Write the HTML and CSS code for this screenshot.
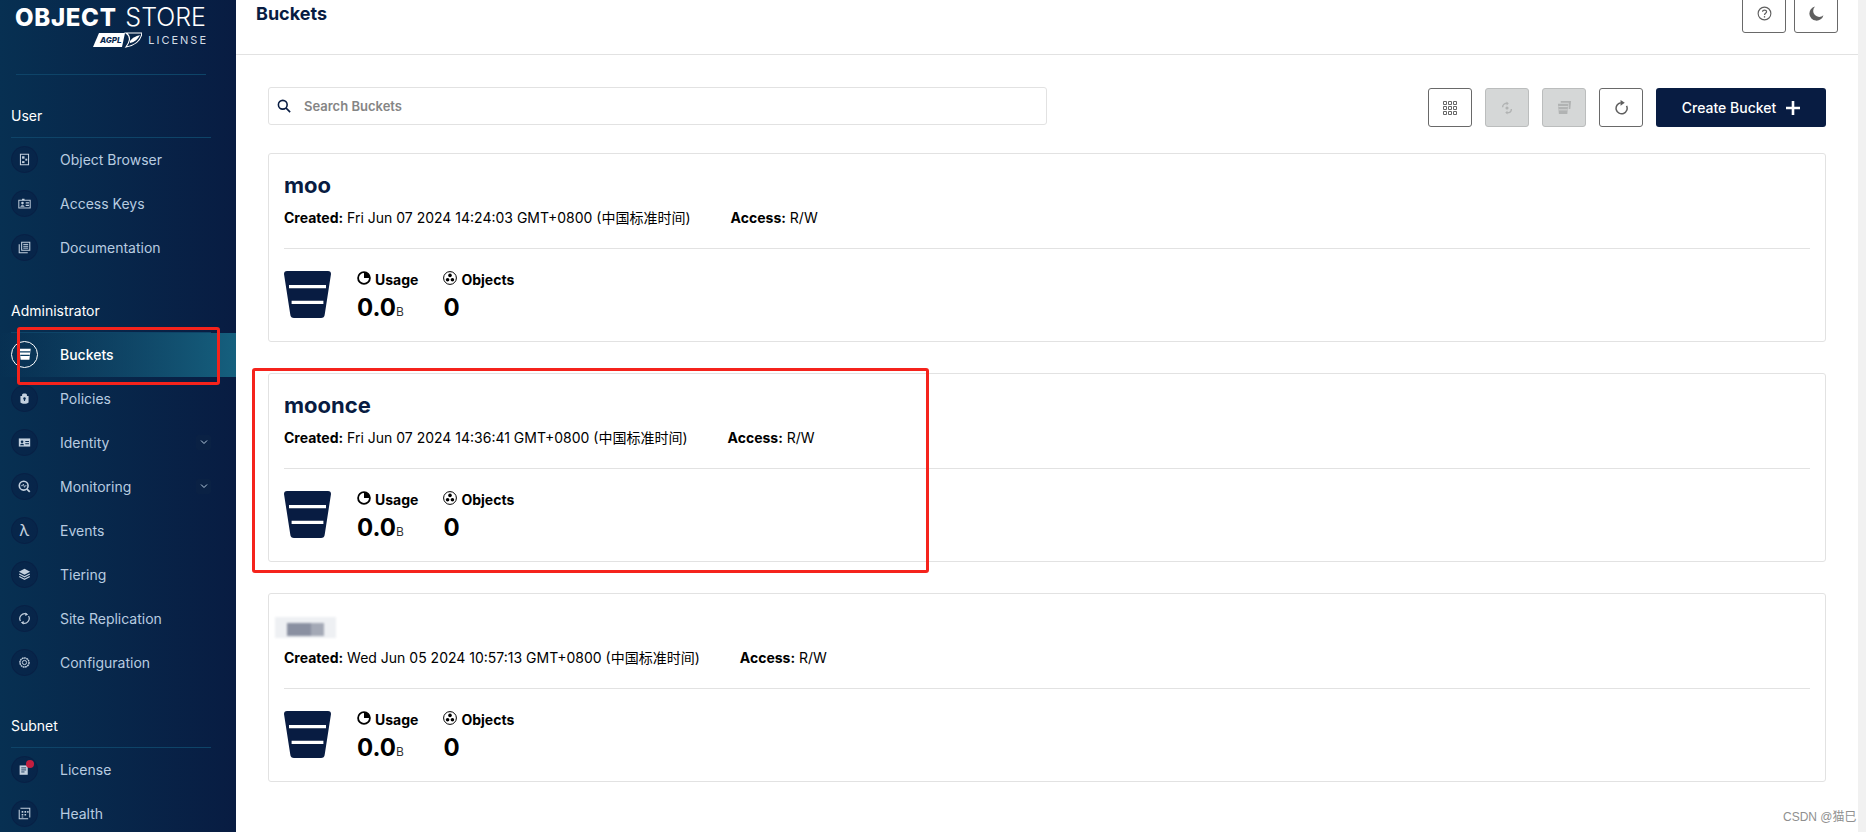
FILE: index.html
```html
<!DOCTYPE html>
<html lang="en">
<head>
<meta charset="utf-8">
<title>Buckets</title>
<link rel="stylesheet" href="styles.css">
</head>
<body>
<div class="app">
  <aside class="sidebar">
    <div class="brand">
      <div class="brand-name"><b>OBJECT</b><span>STORE</span></div>
      <div class="brand-sub">
        <svg class="agpl" viewBox="0 0 49 16" width="49" height="16"><path d="M6 1H32L29 15H0Z" fill="#fff"/><path d="M33 1H49C48 7 44 13 33 15C36 11 39 5 33 1Z" fill="none" stroke="#fff" stroke-width="1.2"/><path d="M37 9C40 5 44 4 47 3C45 7 42 10 37 11Z" fill="#fff"/><text x="7" y="11" class="agpl-text">AGPL</text></svg>
        <span class="license">LICENSE</span>
      </div>
    </div>

    <div class="section-title">User</div>
    <a class="nav"><span class="ic"><svg viewBox="0 0 16 16"><path d="M3 1.5H13V14.5H3Z" fill="none" stroke="currentColor" stroke-width="1.3"/><rect x="5" y="4" width="3" height="3" fill="currentColor"/><rect x="9" y="7" width="2.4" height="2.4" fill="currentColor"/><rect x="5" y="10" width="3" height="2.4" fill="currentColor"/></svg></span>Object Browser</a>
    <a class="nav"><span class="ic"><svg viewBox="0 0 16 16"><rect x="1" y="4" width="14" height="9.5" fill="none" stroke="currentColor" stroke-width="1.2"/><circle cx="5.5" cy="7.5" r="1.6" fill="currentColor"/><path d="M3 12C3 9.5 8 9.5 8 12ZM5 2H8V4H5ZM9.5 6.5H13.5V8H9.5ZM9.5 9.5H13.5V11H9.5Z" fill="currentColor"/></svg></span>Access Keys</a>
    <a class="nav"><span class="ic"><svg viewBox="0 0 16 16"><path d="M4.5 1.5H14.5V11.5H4.5Z" fill="none" stroke="currentColor" stroke-width="1.3"/><path d="M1.5 4V14.5H12" fill="none" stroke="currentColor" stroke-width="1.3"/><path d="M6.5 4.2H12.5M6.5 6.5H12.5M6.5 8.8H12.5" stroke="currentColor" stroke-width="1.2"/></svg></span>Documentation</a>

    <div class="section-title">Administrator</div>
    <a class="nav nav-active"><span class="ic"><svg viewBox="0 0 16 16"><path d="M1.5 2H14.5L13 14.5H3Z" fill="currentColor"/><path d="M2 5.6H14M2.6 9.6H13.4" stroke="#0b3c60" stroke-width="1.3"/></svg></span>Buckets</a>
    <a class="nav"><span class="ic"><svg viewBox="0 0 16 16"><path d="M5 5V3.5C5 1.2 11 1.2 11 3.5V5H13V13C11 15 5 15 3 13V5Z" fill="currentColor"/><circle cx="8" cy="8" r="1.5" fill="#07294e"/><rect x="7.3" y="8" width="1.4" height="3" fill="#07294e"/></svg></span>Policies</a>
    <a class="nav nav-more"><span class="ic"><svg viewBox="0 0 16 16"><path d="M1 3H15V13H1Z" fill="currentColor"/><circle cx="5" cy="7" r="1.6" fill="#07294e"/><path d="M2.6 11.5C2.6 9 7.4 9 7.4 11.5ZM9 6.2H13.5V7.5H9ZM9 9H13.5V10.3H9Z" fill="#07294e"/></svg></span>Identity<span class="chev"><svg viewBox="0 0 10 10"><path d="M2 3.5L5 6.5L8 3.5" fill="none" stroke="currentColor" stroke-width="1"/></svg></span></a>
    <a class="nav nav-more"><span class="ic"><svg viewBox="0 0 16 16"><circle cx="7" cy="7" r="5.4" fill="none" stroke="currentColor" stroke-width="2"/><path d="M3.8 7H5.5L6.6 5L8 9L9 7H10.5" fill="none" stroke="currentColor" stroke-width="1"/><path d="M10.8 10.8L14.5 14.5" stroke="currentColor" stroke-width="2.2"/></svg></span>Monitoring<span class="chev"><svg viewBox="0 0 10 10"><path d="M2 3.5L5 6.5L8 3.5" fill="none" stroke="currentColor" stroke-width="1"/></svg></span></a>
    <a class="nav"><span class="ic ic-glyph">λ</span>Events</a>
    <a class="nav"><span class="ic"><svg viewBox="0 0 16 16"><path d="M8 1L15 4.6L8 8.2L1 4.6Z" fill="currentColor"/><path d="M1.5 7.4L8 10.8L14.5 7.4" fill="none" stroke="currentColor" stroke-width="1.5"/><path d="M1.5 10.4L8 13.8L14.5 10.4" fill="none" stroke="currentColor" stroke-width="1.5"/></svg></span>Tiering</a>
    <a class="nav"><span class="ic"><svg viewBox="0 0 16 16"><path d="M3 11A6 6 0 0 1 10.5 2.5M13 5A6 6 0 0 1 5.5 13.5" fill="none" stroke="currentColor" stroke-width="1.5"/><path d="M9 .5L12.5 3L9 5ZM7 11L3.5 13L7 15.5Z" fill="currentColor"/></svg></span>Site Replication</a>
    <a class="nav"><span class="ic"><svg viewBox="0 0 16 16"><circle cx="8" cy="8" r="5.6" fill="none" stroke="currentColor" stroke-width="1.8" stroke-dasharray="2.2 .6"/><circle cx="8" cy="8" r="2.6" fill="none" stroke="currentColor" stroke-width="1.2"/></svg></span>Configuration</a>

    <div class="section-title">Subnet</div>
    <a class="nav"><span class="ic"><svg viewBox="0 0 16 16"><path d="M2 3H12V14.5H2Z" fill="currentColor"/><path d="M4 6H10M4 8.5H10M4 11H8" stroke="#07294e" stroke-width="1"/></svg><i class="dot"></i></span>License</a>
    <a class="nav"><span class="ic"><svg viewBox="0 0 16 16"><path d="M3 1.5H14.5V13" fill="none" stroke="currentColor" stroke-width="1.3"/><path d="M1.5 3.5V14.5H12.5" fill="none" stroke="currentColor" stroke-width="1.3"/><path d="M4.5 5H6.5V7H4.5ZM8 5H10V7H8ZM11.3 5H13V7H11.3ZM4.5 8.5H6.5V10.5H4.5ZM8 8.5H10V10.5H8ZM4.5 11.8H6.5V13H4.5Z" fill="currentColor"/></svg></span>Health</a>
  </aside>

  <main class="main">
    <header class="topbar">
      <h1 class="page-title">Buckets</h1>
      <div class="top-actions">
        <button class="icon-btn"><svg viewBox="0 0 16 16" width="15" height="15"><circle cx="8" cy="8" r="6.8" fill="none" stroke="#5f5f5f" stroke-width="1.2"/><path d="M5.9 6.2C5.9 3.7 10.2 3.7 10.2 6.2C10.2 7.8 8 7.8 8 9.6" fill="none" stroke="#5f5f5f" stroke-width="1.3"/><rect x="7.3" y="10.8" width="1.4" height="1.5" fill="#5f5f5f"/></svg></button>
        <button class="icon-btn"><svg viewBox="0 0 16 16" width="15" height="15"><path d="M6.4 .6A7.6 7.6 0 1 0 15.4 9.8A6.3 6.3 0 0 1 6.4 .6Z" fill="#5f5f5f"/></svg></button>
      </div>
    </header>

    <div class="content">
      <div class="toolbar">
        <label class="search">
          <svg viewBox="0 0 16 16" width="14" height="14"><circle cx="6.6" cy="6.6" r="5" fill="none" stroke="#081c42" stroke-width="1.8"/><path d="M10.4 10.4L15 15" stroke="#081c42" stroke-width="1.8"/></svg>
          <span class="placeholder">Search Buckets</span>
        </label>
        <div class="actions">
          <button class="icon-btn"><svg viewBox="0 0 14 14" width="14" height="14"><path d="M.5 .5H3.5V3.5H.5ZM5.5 .5H8.5V3.5H5.5ZM10.5 .5H13.5V3.5H10.5ZM.5 5.5H3.5V8.5H.5ZM5.5 5.5H8.5V8.5H5.5ZM10.5 5.5H13.5V8.5H10.5ZM.5 10.5H3.5V13.5H.5ZM5.5 10.5H8.5V13.5H5.5ZM10.5 10.5H13.5V13.5H10.5Z" fill="none" stroke="#666" stroke-width="1"/></svg></button>
          <button class="icon-btn is-off"><svg viewBox="0 0 16 16" width="14" height="14"><path d="M3 7C3 4 5.5 2.5 8 2.5M13 9C13 12 10.5 13.5 8 13.5" fill="none" stroke="#b1b3b3" stroke-width="1.6"/><path d="M7.5 .5L10 2.8L7.5 5ZM8.5 11L6 13.2L8.5 15.5Z" fill="#b1b3b3"/><circle cx="8" cy="8" r="1.8" fill="#b1b3b3"/></svg></button>
          <button class="icon-btn is-off"><svg viewBox="0 0 16 16" width="15" height="15"><path d="M4 1H15L14.2 9.5H12.5V3H4ZM1 4H12L11 15H2Z" fill="#b1b3b3"/><path d="M1.5 7H11.5M1.8 10.5H11.2" stroke="#d5d7d7" stroke-width="1"/></svg></button>
          <button class="icon-btn"><svg viewBox="0 0 16 16" width="15" height="15"><path d="M13.4 6.2A5.9 5.9 0 1 1 7.2 3" fill="none" stroke="#5f5f5f" stroke-width="1.6"/><path d="M7 0L11.5 3L7 6Z" fill="#5f5f5f"/></svg></button>
          <button class="create">Create Bucket<svg viewBox="0 0 14 14" width="14" height="14"><path d="M7 0V14M0 7H14" stroke="#fff" stroke-width="2.6"/></svg></button>
        </div>
      </div>

      <article class="card">
        <h2 class="card-name">moo</h2>
        <div class="meta"><span><b>Created:</b> Fri Jun 07 2024 14:24:03 GMT+0800 (中国标准时间)</span><span><b>Access:</b> R/W</span></div>
        <div class="stats">
          <svg class="bucket" viewBox="0 0 47 47"><path d="M3 0H44C46 0 47 1 47 3L40.8 43C40.6 46 39 47 37 47H10C8 47 6.4 46 6.2 43L0 3C0 1 1 0 3 0Z" fill="#081c42"/><path d="M5 15.7H42M7.6 31.3H39.4" stroke="#fff" stroke-width="3.2"/></svg>
          <div class="stat"><div class="stat-label"><svg viewBox="0 0 14 14" width="14" height="14"><circle cx="7" cy="7" r="5.9" fill="none" stroke="#000" stroke-width="1.8"/><path d="M7 7V1.2A5.8 5.8 0 0 1 12.8 7Z" fill="#000"/></svg>Usage</div><div class="stat-value">0.0<small>B</small></div></div>
          <div class="stat"><div class="stat-label"><svg viewBox="0 0 14 14" width="14" height="14"><circle cx="7" cy="7" r="6.4" fill="none" stroke="#000" stroke-width="1"/><circle cx="7" cy="4.4" r="1.8" fill="#000"/><circle cx="4.6" cy="8.8" r="1.8" fill="#000"/><circle cx="9.4" cy="8.8" r="1.8" fill="#000"/></svg>Objects</div><div class="stat-value">0</div></div>
        </div>
      </article>

      <article class="card">
        <h2 class="card-name">moonce</h2>
        <div class="meta"><span><b>Created:</b> Fri Jun 07 2024 14:36:41 GMT+0800 (中国标准时间)</span><span><b>Access:</b> R/W</span></div>
        <div class="stats">
          <svg class="bucket" viewBox="0 0 47 47"><path d="M3 0H44C46 0 47 1 47 3L40.8 43C40.6 46 39 47 37 47H10C8 47 6.4 46 6.2 43L0 3C0 1 1 0 3 0Z" fill="#081c42"/><path d="M5 15.7H42M7.6 31.3H39.4" stroke="#fff" stroke-width="3.2"/></svg>
          <div class="stat"><div class="stat-label"><svg viewBox="0 0 14 14" width="14" height="14"><circle cx="7" cy="7" r="5.9" fill="none" stroke="#000" stroke-width="1.8"/><path d="M7 7V1.2A5.8 5.8 0 0 1 12.8 7Z" fill="#000"/></svg>Usage</div><div class="stat-value">0.0<small>B</small></div></div>
          <div class="stat"><div class="stat-label"><svg viewBox="0 0 14 14" width="14" height="14"><circle cx="7" cy="7" r="6.4" fill="none" stroke="#000" stroke-width="1"/><circle cx="7" cy="4.4" r="1.8" fill="#000"/><circle cx="4.6" cy="8.8" r="1.8" fill="#000"/><circle cx="9.4" cy="8.8" r="1.8" fill="#000"/></svg>Objects</div><div class="stat-value">0</div></div>
        </div>
      </article>

      <article class="card">
        <div class="card-name redacted"><i class="mosaic"></i></div>
        <div class="meta"><span><b>Created:</b> Wed Jun 05 2024 10:57:13 GMT+0800 (中国标准时间)</span><span><b>Access:</b> R/W</span></div>
        <div class="stats">
          <svg class="bucket" viewBox="0 0 47 47"><path d="M3 0H44C46 0 47 1 47 3L40.8 43C40.6 46 39 47 37 47H10C8 47 6.4 46 6.2 43L0 3C0 1 1 0 3 0Z" fill="#081c42"/><path d="M5 15.7H42M7.6 31.3H39.4" stroke="#fff" stroke-width="3.2"/></svg>
          <div class="stat"><div class="stat-label"><svg viewBox="0 0 14 14" width="14" height="14"><circle cx="7" cy="7" r="5.9" fill="none" stroke="#000" stroke-width="1.8"/><path d="M7 7V1.2A5.8 5.8 0 0 1 12.8 7Z" fill="#000"/></svg>Usage</div><div class="stat-value">0.0<small>B</small></div></div>
          <div class="stat"><div class="stat-label"><svg viewBox="0 0 14 14" width="14" height="14"><circle cx="7" cy="7" r="6.4" fill="none" stroke="#000" stroke-width="1"/><circle cx="7" cy="4.4" r="1.8" fill="#000"/><circle cx="4.6" cy="8.8" r="1.8" fill="#000"/><circle cx="9.4" cy="8.8" r="1.8" fill="#000"/></svg>Objects</div><div class="stat-value">0</div></div>
        </div>
      </article>
    </div>
  </main>
  <div class="scrollbar"></div>

  <div class="mark mark-nav"></div>
  <div class="mark mark-card"></div>
  <div class="watermark">CSDN @猫巳</div>
</div>
</body>
</html>
```

FILE: styles.css
```css
* { box-sizing: border-box; }
html, body { margin: 0; height: 100%; }
body { font-family: Inter, "Noto Sans CJK SC", sans-serif; background: #fff; color: #000; overflow: hidden; }

.app { position: relative; display: flex; height: 832px; overflow: hidden; }

/* Sidebar */
.sidebar { flex: 0 0 236px; height: 832px; overflow: hidden; background: linear-gradient(90deg, #073052 0%, #081c42 100%); color: #b8cce0; }
.brand { height: 75px; margin: 0 30px 0 16px; padding-top: 4px; border-bottom: 1px solid #0e4468; }
.brand-name { display: flex; justify-content: space-between; align-items: baseline; color: #fff; font-size: 24px; line-height: 26px; white-space: nowrap; }
.brand-name b { font-weight: 800; letter-spacing: .7px; margin-left: -1px; }
.brand-name span { font-weight: 300; font-size: 25px; letter-spacing: 0; }
.brand-sub { display: flex; justify-content: flex-end; align-items: center; gap: 6px; margin-top: 1px; }
.agpl { display: block; }
.agpl-text { font: 800 8px Inter, sans-serif; fill: #0a2a50; font-style: italic; }
.license { font-size: 11px; letter-spacing: 2px; margin-right: -2px; color: #d4dde6; }

.section-title { height: 63px; margin: 0 25px 0 11px; padding-bottom: 13px; display: flex; align-items: flex-end; color: #fff; font-size: 14px; line-height: 17px; border-bottom: 1px solid #0e4468; }

.nav { height: 44px; padding: 0 25px 2px 11px; display: flex; align-items: center; font-size: 14px; color: #b8cce0; }
.ic { position: relative; flex: 0 0 27px; width: 27px; height: 27px; margin-right: 22px; border-radius: 50%; display: flex; align-items: center; justify-content: center; background: rgba(8, 28, 66, .45); border: 1px solid rgba(8, 28, 66, .5); color: #c3d0de; }
.ic svg { width: 13px; height: 13px; display: block; }
.ic-glyph { font-size: 16px; line-height: 1; }
.nav-active { color: #fff; font-weight: 500; background: linear-gradient(90deg, rgba(21, 96, 126, 0) 0%, #15607e 100%); }
.nav-active .ic { background: transparent; border-color: #fff; color: #fff; }
.nav-active .ic svg { width: 14px; height: 14px; }
.chev { margin-left: auto; width: 15px; height: 15px; border-radius: 2px; background: #0a2144; color: #b8cce0; display: flex; align-items: center; justify-content: center; }
.chev svg { width: 10px; height: 10px; }
.dot { position: absolute; top: 3px; right: 3px; width: 8px; height: 8px; border-radius: 50%; background: #c41e3f; }

/* Main */
.main { flex: 1; min-width: 0; }
.scrollbar { flex: 0 0 8px; background: #f1f1f1; }
.topbar { height: 55px; padding-left: 20px; display: flex; justify-content: space-between; border-bottom: 1px solid #e2e2e2; overflow: hidden; }
.page-title { margin: 4px 0 0; font-size: 18px; line-height: 19px; font-weight: 700; color: #081c42; }
.top-actions { display: flex; gap: 8px; margin-top: -6px; margin-right: 20px; height: 39px; }

.icon-btn { width: 44px; height: 39px; padding: 0; border: 1px solid #696969; border-radius: 3px; background: #fff; display: flex; align-items: center; justify-content: center; }
.is-off { background: #d5d7d7; border-color: #bbbdbd; }

.content { padding: 32px 32px 0; }
.toolbar { display: flex; justify-content: space-between; align-items: flex-start; }
.search { width: 779px; height: 38px; padding: 0 8px; display: flex; align-items: center; gap: 13px; border: 1px solid #e2e2e2; border-radius: 3px; }
.search svg { flex: none; }
.placeholder { font-size: 13px; font-weight: 600; color: #858585; }
.actions { display: flex; gap: 13px; margin-top: 1px; }
.create { width: 170px; height: 39px; padding: 0; border: 0; border-radius: 3px; background: #081c42; color: #fff; font: 500 14px Inter, sans-serif; display: flex; align-items: center; justify-content: center; gap: 10px; }

.card { height: 189px; margin-top: 31px; padding: 18px 15px 0; border: 1px solid #e2e2e2; border-radius: 3px; }
.toolbar + .card { margin-top: 26px; }
.card-name { margin: 0; height: 26px; font-size: 22px; line-height: 26px; font-weight: 700; color: #081c42; }
.redacted { position: relative; }
.mosaic { position: absolute; left: -9px; top: 5px; width: 61px; height: 21px; background: #eef0f3; filter: blur(1px); }
.mosaic::after { content: ""; position: absolute; left: 12px; top: 6px; width: 37px; height: 13px; background: linear-gradient(90deg, #8a90a1 0 24px, #a4a9b6 24px 100%); }
.meta { display: flex; gap: 40px; margin-top: 11px; padding-bottom: 21px; font-size: 14px; line-height: 18px; color: #000; border-bottom: 1px solid #e2e2e2; }
.meta b { font-weight: 700; }
.stats { display: flex; gap: 25px; margin-top: 22px; }
.bucket { width: 47px; height: 47px; margin-right: 1px; flex: none; }
.stat-label { display: flex; align-items: center; gap: 4px; height: 17px; font-size: 14px; line-height: 17px; font-weight: 700; }
.stat-label svg { flex: none; margin-top: -3px; }
.stat-value { margin-top: 5px; font-size: 24px; line-height: 30px; font-weight: 700; }
.stat-value small { font-size: 12px; font-weight: 400; color: #333; }

/* Annotations drawn over the screenshot */
.mark { position: absolute; border: 3px solid #f5231c; border-radius: 3px; pointer-events: none; }
.mark-nav { left: 17px; top: 327px; width: 203px; height: 58px; }
.mark-card { left: 252px; top: 368px; width: 677px; height: 205px; }
.watermark { position: absolute; left: 1783px; top: 810px; font-family: "Liberation Sans", "Noto Sans CJK SC", sans-serif; font-size: 12px; line-height: 15px; color: #8f8f8f; }
```
